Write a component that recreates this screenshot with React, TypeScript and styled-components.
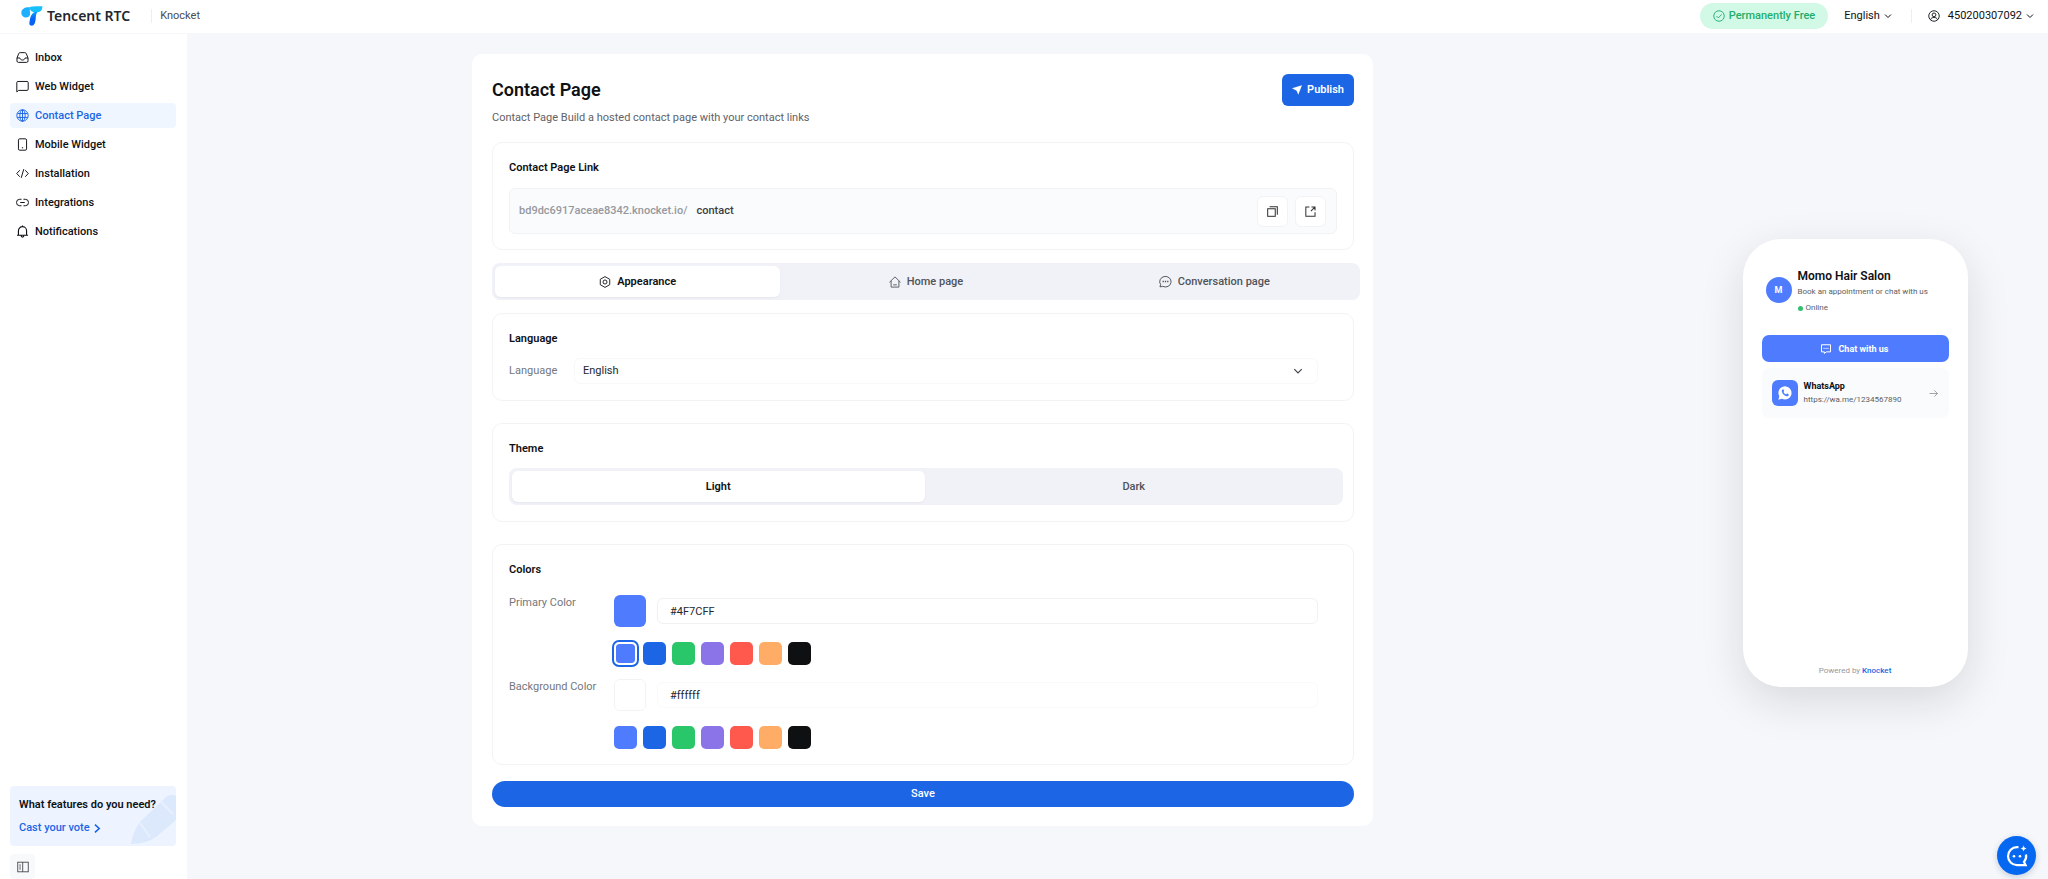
import React, { useState } from "react";
import styled, { createGlobalStyle, css } from "styled-components";

const GlobalStyle = createGlobalStyle`
  *, *::before, *::after { box-sizing: border-box; }
  body {
    margin: 0;
    background: #f5f7fb;
    color: #0f1115;
    font-family: Roboto, "Liberation Sans", sans-serif;
    font-size: 11px;
    line-height: 16px;
  }
  button, input, select { font: inherit; color: inherit; }
  button { cursor: pointer; border: 0; padding: 0; background: none; }
  h1, h2, p { margin: 0; }
  a { text-decoration: none; color: inherit; }
  svg { display: block; flex: none; }
`;

/* ---------- icons ---------- */

type IconProps = { size?: number; strokeWidth?: number; children?: React.ReactNode };

const Icon = ({ size = 13, strokeWidth = 1.2, children }: IconProps) => (
  <svg
    width={size}
    height={size}
    viewBox="0 0 16 16"
    fill="none"
    stroke="currentColor"
    strokeWidth={strokeWidth}
    aria-hidden="true"
  >
    {children}
  </svg>
);

const InboxIcon = () => (
  <Icon>
    <path d="M1.200 8.600 3.300 3.300Q3.800 2 5.200 2h5.600q1.400 0 1.900 1.300l2.100 5.300v3.600q0 1.800-1.800 1.800H3q-1.800 0-1.800-1.800z" />
    <path d="M1.200 8.600h3.600c.3 1.600 1.600 2.500 3.200 2.500s2.900-.9 3.200-2.500h3.600" />
  </Icon>
);
const WidgetIcon = () => (
  <Icon>
    <path d="M1 14.600V3.200Q1 1.800 2.400 1.800h11.200Q15 1.800 15 3.200v8.200q0 1.400-1.400 1.400H3.200z" />
  </Icon>
);
const GlobeIcon = () => (
  <Icon>
    <circle cx="8" cy="8" r="7" />
    <ellipse cx="8" cy="8" rx="3.300" ry="7" />
    <path d="M1.700 5.600h12.600M1.700 10.400h12.600M8 1v14" />
  </Icon>
);
const MobileIcon = () => (
  <Icon>
    <rect x="3" y="1" width="10" height="14" rx="1.600" />
    <path d="M7.200 12h1.600" />
  </Icon>
);
const CodeIcon = () => (
  <Icon>
    <path d="M4.600 4 .9 8l3.700 4M11.400 4l3.700 4-3.700 4M9.600 2.600 6.400 13.400" />
  </Icon>
);
const LinkIcon = () => (
  <Icon>
    <path d="M6.800 4H4.600a4 4 0 0 0 0 8h2.200M9.200 4h2.200a4 4 0 0 1 0 8H9.200M5.200 8h5.600" />
  </Icon>
);
const BellIcon = () => (
  <Icon strokeWidth={1.4}>
    <path d="M3 12.400V7a5 5 0 0 1 10 0v5.400M1.200 12.600h13.600M8 .6V2M6.200 13c.2 2.600 3.400 2.600 3.600 0" />
  </Icon>
);
const CheckCircleIcon = () => (
  <Icon size={12}>
    <circle cx="8" cy="8" r="7" />
    <path d="m4.600 8 2.500 2.500 4.500-4.700" />
  </Icon>
);
const UserIcon = () => (
  <Icon size={12}>
    <circle cx="8" cy="8" r="7" />
    <circle cx="8" cy="6.500" r="2.500" />
    <path d="M3.400 13c.7-2.400 2.300-3 4.600-3s3.900.6 4.600 3" />
  </Icon>
);
const ChevronDownIcon = ({ size = 8, strokeWidth = 2 }: IconProps) => (
  <Icon size={size} strokeWidth={strokeWidth}>
    <path d="m2 5 6 6 6-6" />
  </Icon>
);
const ChevronRightIcon = () => (
  <Icon size={9} strokeWidth={2.8}>
    <path d="m3.500 1 7.500 7-7.500 7" />
  </Icon>
);
const PanelIcon = () => (
  <Icon size={12}>
    <rect x="1" y="1.600" width="14" height="12.800" />
    <path d="M7.600 1.600v12.800M3 5.400h2.200M3 8h2.200M3 10.600h2.200" />
  </Icon>
);
const PlaneIcon = () => (
  <svg width="10" height="10" viewBox="0 0 16 16" fill="currentColor" aria-hidden="true">
    <path d="M0 5.200 16 .4 10 15.400 7.400 9.200z" />
  </svg>
);
const CopyIcon = () => (
  <Icon size={11} strokeWidth={1.5}>
    <rect x="1" y="4" width="11" height="11" />
    <path d="M3.800 1.200H15v11.400" />
  </Icon>
);
const OpenIcon = () => (
  <Icon size={11} strokeWidth={1.5}>
    <path d="M6.400 1.400H1.200v13.400h13.400V9M9.400 1.400h5.200v5.200M14.600 1.400 8.600 7.400" />
  </Icon>
);
const HexIcon = () => (
  <Icon size={12}>
    <path d="M8 .8 14.300 4.400v7.200L8 15.200 1.700 11.600V4.400z" />
    <circle cx="8" cy="8" r="2.700" />
  </Icon>
);
const HomeIcon = () => (
  <Icon size={12}>
    <path d="M.6 8.400 8 1.200l7.400 7.200M2.800 6.600v8.200h10.400V6.600M5.600 11.800h4.800" />
  </Icon>
);
const BubbleIcon = () => (
  <Icon size={13}>
    <path d="M1.200 14.600 2 11.800A7 6.500 0 1 1 4.600 14z" />
    <path d="M4.400 8H6M7.200 8h1.600M10 8h1.600" strokeWidth="1.800" />
  </Icon>
);
const ChatSquareIcon = () => (
  <Icon size={10} strokeWidth={1.6}>
    <path d="M.8 1.200h14.400v11.400H8.400l-3 2.600v-2.600H.8zM4 7h1.800M7.100 7h1.800M10.200 7H12" />
  </Icon>
);
const ArrowRightIcon = () => (
  <Icon size={9}>
    <path d="M1 8h14M9.400 2.400 15 8l-5.600 5.600" />
  </Icon>
);
const WhatsAppIcon = () => (
  <svg width="14" height="14" viewBox="0 0 16 16" aria-hidden="true">
    <path d="M.4 15.600 1.500 11.700A7.500 7.500 0 1 1 4.400 14.500z" fill="#fff" />
    <path
      d="M5.100 4c.5-.5 1-.3 1.200.1l.6 1.400c.1.300 0 .5-.2.800l-.4.500c.6 1.300 1.500 2.200 2.900 2.800l.7-.8c.2-.2.4-.2.600-.1l1.500.8c.4.200.4.500.2 1-.4 1-1.600 1.500-2.600 1.200C7 11 5 9 4.400 6.600 4.100 5.500 4.500 4.600 5.100 4z"
      fill="#4f7cff"
    />
  </svg>
);
const LogoMark = () => (
  <svg width="22" height="20" viewBox="64 16 66 60" aria-hidden="true">
    <defs>
      <linearGradient id="stem" x1="0" y1="0" x2="0" y2="1">
        <stop offset="0" stopColor="#0aa5fb" />
        <stop offset=".5" stopColor="#0563f5" />
      </linearGradient>
    </defs>
    <path d="M90 20C76 19 65 25 65 36c0 10 9 16 18 14 8-2 9-9 8-15-1-7 0-11-1-15z" fill="#1fb0fd" />
    <path d="M88 21c6-5 18-4 40-4.500C129 28 122 36 106 35 98 35 92 30 88 21z" fill="#16c0fb" />
    <path d="M113 34c-4 6-4 12-5 20-1 12-4 21-12 21-7 0-8-6-6-14 2-12 4-20 13-26 4-2 8-1 10-1z" fill="url(#stem)" />
  </svg>
);
const AssistantIcon = () => (
  <svg width="24" height="24" viewBox="0 0 24 24" fill="none" aria-hidden="true">
    <path
      d="M13.500 3.200H12a8.900 8.900 0 1 0 0 17.900h8.600l-1.600-3.200a8.900 8.900 0 0 0 2-7.400"
      stroke="#fff"
      strokeWidth="2.200"
    />
    <path d="M18.600 1.200c.4 2 1 2.700 3 3.200-2 .5-2.600 1.200-3 3.200-.4-2-1-2.700-3-3.200 2-.5 2.600-1.200 3-3.200z" fill="#fff" />
    <circle cx="9" cy="12.200" r="1.300" fill="#fff" />
    <circle cx="15" cy="12.200" r="1.300" fill="#fff" />
  </svg>
);
const PencilArt = () => (
  <svg width="46" height="54" viewBox="0 0 46 54" aria-hidden="true">
    <path d="M1 54C3 44 6 36 12 30L36 7q5-4 10-1v24L26 47Q16 54 1 54z" fill="#dce9fd" />
    <path d="M31 12 43 24M10 33l10 14" stroke="#e8f0fe" strokeWidth="2" />
  </svg>
);

/* ---------- header ---------- */

const Page = styled.div`
  min-height: 100vh;
  display: flex;
  flex-direction: column;
`;

const Header = styled.header`
  height: 34px;
  padding: 0 14px 2px 21px;
  display: flex;
  align-items: center;
  background: #fff;
  border-bottom: 1px solid #f6f7fa;
`;

const Brand = styled.a`
  display: flex;
  align-items: center;
  gap: 4px;
  font: 600 14px/20px "Noto Sans", sans-serif;
  color: #23272e;
`;

const Divider = styled.span<{ $gap: number; $end: number }>`
  width: 1px;
  height: 14px;
  margin: 0 ${(p) => p.$end}px 0 ${(p) => p.$gap}px;
  background: #eceef2;
`;

const Product = styled.span`
  color: #4a4d52;
`;

const HeaderRight = styled.div`
  margin-left: auto;
  display: flex;
  align-items: center;
`;

const FreePill = styled.span`
  height: 26px;
  margin-right: 16px;
  padding: 0 13px;
  display: flex;
  align-items: center;
  gap: 4px;
  border-radius: 13px;
  background: #d2f8e6;
  color: #1fae6c;
  font-weight: 500;
`;

const HeaderButton = styled.button`
  display: flex;
  align-items: center;
  gap: 4px;
`;

const Account = styled.span`
  margin-left: 4px;
`;

/* ---------- sidebar ---------- */

const Body = styled.div`
  flex: 1;
  display: flex;
`;

const Sidebar = styled.aside`
  width: 187px;
  flex: none;
  padding: 11px 11px 0 10px;
  display: flex;
  flex-direction: column;
  background: #fff;
`;

const Nav = styled.nav`
  display: flex;
  flex-direction: column;
  gap: 4px;
  margin-bottom: auto;
`;

const NavItem = styled.a<{ $active?: boolean }>`
  height: 25px;
  padding: 0 6px;
  display: flex;
  align-items: center;
  gap: 6px;
  border-radius: 4px;
  font-weight: 500;
  ${(p) =>
    p.$active &&
    css`
      background: #f0f6ff;
      color: #1c66e5;
    `}
`;

const Promo = styled.section`
  position: relative;
  height: 60px;
  margin-bottom: 8px;
  padding: 11px 9px;
  display: flex;
  flex-direction: column;
  gap: 7px;
  border-radius: 4px;
  background: #edf4ff;
  overflow: hidden;
`;

const PromoArt = styled.div`
  position: absolute;
  right: 0;
  bottom: 2px;
`;

const PromoTitle = styled.h2`
  position: relative;
  font-size: 11px;
  line-height: 16px;
  font-weight: 600;
`;

const PromoLink = styled.a`
  position: relative;
  display: flex;
  align-items: center;
  gap: 3px;
  color: #1c66e5;
  font-weight: 500;
`;

const CollapseButton = styled.button`
  width: 25px;
  height: 25px;
  display: grid;
  place-items: center;
  border-radius: 4px;
  background: #f8f9fa;
  color: #44474d;
`;

/* ---------- editor ---------- */

const Main = styled.main`
  flex: 1;
  min-width: 0;
  display: flex;
  gap: 4px;
`;

const EditorColumn = styled.div`
  flex: 1;
  min-width: 0;
  padding: 20px 24px 24px;
`;

const EditorCard = styled.section`
  max-width: 901px;
  margin: 0 auto;
  padding: 20px 19px 19px 20px;
  border-radius: 10px;
  background: #fff;
`;

const TitleRow = styled.div`
  display: flex;
  align-items: center;
  justify-content: space-between;
`;

const Title = styled.h1`
  font-size: 18px;
  line-height: 32px;
  font-weight: 600;
`;

const PublishButton = styled.button`
  height: 32px;
  padding: 0 10px;
  display: flex;
  align-items: center;
  gap: 5px;
  border-radius: 6px;
  background: #1c66e5;
  color: #fff;
  font-weight: 600;
`;

const Subtitle = styled.p`
  margin: 4px 0 16px;
  color: #5f6267;
`;

const Panel = styled.section<{ $gap: number; $bottom: number }>`
  margin-bottom: ${(p) => p.$gap}px;
  padding: 17px 16px ${(p) => p.$bottom}px;
  border: 1px solid #f2f3f5;
  border-radius: 10px;
`;

const PanelTitle = styled.h2`
  font-size: 11px;
  line-height: 16px;
  font-weight: 600;
`;

const LinkBox = styled.div`
  height: 46px;
  margin-top: 12px;
  padding: 0 10px 0 9px;
  display: flex;
  align-items: center;
  gap: 7px;
  border: 1px solid #f0f2f4;
  border-radius: 6px;
  background: #fafbfd;
  font-weight: 500;
`;

const Domain = styled.label`
  margin-right: 2px;
  color: #96999d;
`;

const SlugInput = styled.input`
  flex: 1;
  min-width: 0;
  padding: 0;
  border: 0;
  outline: 0;
  background: none;
  color: #3b3e43;
`;

const SquareButton = styled.button`
  width: 31px;
  height: 31px;
  display: grid;
  place-items: center;
  border: 1px solid #f2f3f6;
  border-radius: 6px;
  background: #fff;
  color: #333;
`;

const Segmented = styled.div<{ $top?: number; $bottom?: number }>`
  height: 37px;
  margin: ${(p) => p.$top ?? 0}px -6px ${(p) => p.$bottom ?? 0}px 0;
  padding: 3px;
  display: flex;
  gap: 3px;
  border-radius: 8px;
  background: #f0f2f7;
`;

const Segment = styled.button<{ $active?: boolean }>`
  flex: 1;
  display: flex;
  align-items: center;
  justify-content: center;
  gap: 6px;
  border-radius: 6px;
  font-weight: 500;
  color: #505359;
  ${(p) =>
    p.$active &&
    css`
      background: #fff;
      color: #0f1115;
      font-weight: 600;
      box-shadow: 0 1px 2px rgba(30, 40, 70, 0.05);
    `}
`;

const FieldRow = styled.div`
  margin: 11px 19px 0 0;
  display: flex;
  align-items: center;
`;

const FieldLabel = styled.label<{ $width: number }>`
  width: ${(p) => p.$width}px;
  flex: none;
  color: #74777d;
`;

const SelectWrap = styled.div`
  flex: 1;
  display: grid;
  align-items: center;
  > * { grid-area: 1 / 1; }
  > svg { justify-self: end; margin-right: 15px; pointer-events: none; color: #44474d; }
`;

const Select = styled.select`
  width: 100%;
  height: 26px;
  padding: 0 28px 0 8px;
  appearance: none;
  border: 1px solid #f7f8f9;
  border-radius: 6px;
  background: #fff;
  color: #23272e;
`;

const ColorField = styled.div<{ $top: number }>`
  margin: ${(p) => p.$top}px 19px 0 0;
  display: flex;
  align-items: flex-start;
`;

const ColorControls = styled.div`
  flex: 1;
  display: flex;
  flex-direction: column;
  gap: 15px;
`;

const ColorInputs = styled.div`
  display: flex;
  align-items: center;
  gap: 11px;
`;

const ColorWell = styled.input<{ $light?: boolean }>`
  width: 32px;
  height: 32px;
  flex: none;
  padding: 0;
  appearance: none;
  overflow: hidden;
  border: ${(p) => (p.$light ? "1px solid #f2f3f5" : "0")};
  border-radius: 6px;
  background: none;
  &::-webkit-color-swatch-wrapper { padding: 0; }
  &::-webkit-color-swatch { border: 0; border-radius: 0; }
`;

const HexInput = styled.input<{ $faint?: boolean }>`
  flex: 1;
  min-width: 0;
  height: 26px;
  padding: 0 12px;
  border: 1px solid ${(p) => (p.$faint ? "#f9fafa" : "#f0f1f3")};
  border-radius: 6px;
  outline: 0;
  background: #fff;
  color: #23272e;
`;

const Palette = styled.div`
  display: flex;
  gap: 6px;
`;

const Swatch = styled.button<{ $color: string; $selected?: boolean }>`
  width: 23px;
  height: 23px;
  border-radius: 5px;
  background: ${(p) => p.$color};
  ${(p) =>
    p.$selected &&
    css`
      border: 2px solid #fff;
      background-clip: padding-box;
      box-shadow: 0 0 0 2px #1c66e5;
    `}
`;

const SaveButton = styled.button`
  width: 100%;
  height: 26px;
  display: block;
  border-radius: 13px;
  background: #1c66e5;
  color: #fff;
  font-weight: 500;
`;

/* ---------- preview ---------- */

const PreviewColumn = styled.div`
  width: 386px;
  flex: none;
  padding-top: 13px;
  display: flex;
  align-items: center;
  justify-content: center;
`;

const Phone = styled.section`
  width: 225px;
  min-height: 448px;
  padding: 28px 19px 8px;
  display: flex;
  flex-direction: column;
  border-radius: 38px;
  background: #fff;
  box-shadow: 0 14px 44px rgba(20, 20, 20, 0.13);
`;

const Profile = styled.div`
  padding-left: 4px;
  display: flex;
  align-items: center;
  gap: 6px;
`;

const Avatar = styled.span`
  width: 26px;
  height: 26px;
  flex: none;
  margin-bottom: 2px;
  display: grid;
  place-items: center;
  border-radius: 50%;
  background: #4f7cff;
  color: #fff;
  font-size: 9px;
  font-weight: 700;
`;

const BusinessName = styled.h2`
  font-size: 12px;
  line-height: 18px;
  font-weight: 600;
`;

const SmallText = styled.p`
  font-size: 8px;
  line-height: 14px;
  color: #5b5e63;
  white-space: nowrap;
`;

const Status = styled(SmallText)`
  margin-top: 2px;
  display: flex;
  align-items: center;
  gap: 3px;
  &::before {
    content: "";
    width: 5px;
    height: 5px;
    border-radius: 50%;
    background: #2fbf71;
  }
`;

const ChatButton = styled.button`
  height: 27px;
  margin-top: 20px;
  display: flex;
  align-items: center;
  justify-content: center;
  gap: 7px;
  border-radius: 7px;
  background: #4f7cff;
  color: #fff;
  font-size: 9px;
  font-weight: 700;
`;

const ContactLink = styled.a`
  height: 50px;
  margin-top: 6px;
  padding: 0 11px 0 10px;
  display: flex;
  align-items: center;
  gap: 6px;
  border-radius: 7px;
  background: #fafbfd;
  > svg { color: #777a80; }
`;

const ContactBadge = styled.span`
  width: 26px;
  height: 26px;
  display: grid;
  place-items: center;
  border-radius: 6px;
  background: #4f7cff;
`;

const ContactText = styled.div`
  flex: 1;
`;

const ContactName = styled.p`
  font-size: 9px;
  line-height: 14px;
  font-weight: 700;
`;

const Powered = styled.p`
  margin-top: auto;
  text-align: center;
  font-size: 8px;
  color: #96999d;
  a { color: #1c66e5; font-weight: 500; }
`;

const AssistantButton = styled.button`
  position: fixed;
  right: 12px;
  bottom: 4px;
  width: 39px;
  height: 39px;
  display: grid;
  place-items: center;
  border-radius: 50%;
  background: #0667f0;
  box-shadow: 0 2px 6px rgba(20, 40, 80, 0.2);
`;

/* ---------- data ---------- */

const NAV = [
  { label: "Inbox", icon: <InboxIcon /> },
  { label: "Web Widget", icon: <WidgetIcon /> },
  { label: "Contact Page", icon: <GlobeIcon /> },
  { label: "Mobile Widget", icon: <MobileIcon /> },
  { label: "Installation", icon: <CodeIcon /> },
  { label: "Integrations", icon: <LinkIcon /> },
  { label: "Notifications", icon: <BellIcon /> },
];

const TABS = [
  { label: "Appearance", icon: <HexIcon /> },
  { label: "Home page", icon: <HomeIcon /> },
  { label: "Conversation page", icon: <BubbleIcon /> },
];

const PRESETS = ["#4f7cff", "#1c66e5", "#2ac76a", "#8a74e8", "#ff584d", "#ffad66", "#0f1012"];

type ColorPickerProps = {
  id: string;
  label: string;
  value: string;
  top: number;
  light?: boolean;
  onChange: (value: string) => void;
};

const ColorPicker = ({ id, label, value, top, light, onChange }: ColorPickerProps) => (
  <ColorField $top={top}>
    <FieldLabel $width={105} htmlFor={id}>
      {label}
    </FieldLabel>
    <ColorControls>
      <ColorInputs>
        <ColorWell
          type="color"
          aria-label={`${label} picker`}
          $light={light}
          value={value.toLowerCase()}
          onChange={(e) => onChange(e.target.value)}
        />
        <HexInput id={id} $faint={light} value={value} onChange={(e) => onChange(e.target.value)} />
      </ColorInputs>
      <Palette>
        {PRESETS.map((color) => (
          <Swatch
            key={color}
            type="button"
            aria-label={color}
            $color={color}
            $selected={color === value.toLowerCase()}
            onClick={() => onChange(color)}
          />
        ))}
      </Palette>
    </ColorControls>
  </ColorField>
);

export default function App() {
  const [tab, setTab] = useState("Appearance");
  const [theme, setTheme] = useState("Light");
  const [primary, setPrimary] = useState("#4F7CFF");
  const [background, setBackground] = useState("#ffffff");
  const [slug, setSlug] = useState("contact");

  return (
    <Page>
      <GlobalStyle />
      <Header>
        <Brand href="#">
          <LogoMark />
          Tencent RTC
        </Brand>
        <Divider $gap={21} $end={8} />
        <Product>Knocket</Product>
        <HeaderRight>
          <FreePill>
            <CheckCircleIcon />
            Permanently Free
          </FreePill>
          <HeaderButton type="button">
            English
            <ChevronDownIcon />
          </HeaderButton>
          <Divider $gap={19} $end={16} />
          <HeaderButton type="button">
            <UserIcon />
            <Account>450200307092</Account>
            <ChevronDownIcon />
          </HeaderButton>
        </HeaderRight>
      </Header>
      <Body>
        <Sidebar>
          <Nav>
            {NAV.map((item) => (
              <NavItem key={item.label} href="#" $active={item.label === "Contact Page"}>
                {item.icon}
                {item.label}
              </NavItem>
            ))}
          </Nav>
          <Promo>
            <PromoArt>
              <PencilArt />
            </PromoArt>
            <PromoTitle>What features do you need?</PromoTitle>
            <PromoLink href="#">
              Cast your vote
              <ChevronRightIcon />
            </PromoLink>
          </Promo>
          <CollapseButton type="button" aria-label="Collapse sidebar">
            <PanelIcon />
          </CollapseButton>
        </Sidebar>
        <Main>
          <EditorColumn>
            <EditorCard>
              <TitleRow>
                <Title>Contact Page</Title>
                <PublishButton type="button">
                  <PlaneIcon />
                  Publish
                </PublishButton>
              </TitleRow>
              <Subtitle>Contact Page Build a hosted contact page with your contact links</Subtitle>

              <Panel $gap={13} $bottom={15}>
                <PanelTitle>Contact Page Link</PanelTitle>
                <LinkBox>
                  <Domain htmlFor="slug">bd9dc6917aceae8342.knocket.io/</Domain>
                  <SlugInput id="slug" value={slug} onChange={(e) => setSlug(e.target.value)} />
                  <SquareButton type="button" aria-label="Copy link">
                    <CopyIcon />
                  </SquareButton>
                  <SquareButton type="button" aria-label="Open link">
                    <OpenIcon />
                  </SquareButton>
                </LinkBox>
              </Panel>

              <Segmented role="tablist" $bottom={13}>
                {TABS.map((item) => (
                  <Segment
                    key={item.label}
                    type="button"
                    role="tab"
                    aria-selected={tab === item.label}
                    $active={tab === item.label}
                    onClick={() => setTab(item.label)}
                  >
                    {item.icon}
                    {item.label}
                  </Segment>
                ))}
              </Segmented>

              <Panel $gap={22} $bottom={16}>
                <PanelTitle>Language</PanelTitle>
                <FieldRow>
                  <FieldLabel $width={65} htmlFor="language">
                    Language
                  </FieldLabel>
                  <SelectWrap>
                    <Select id="language" defaultValue="English">
                      <option>English</option>
                    </Select>
                    <ChevronDownIcon size={10} />
                  </SelectWrap>
                </FieldRow>
              </Panel>

              <Panel $gap={22} $bottom={16}>
                <PanelTitle>Theme</PanelTitle>
                <Segmented $top={11}>
                  {["Light", "Dark"].map((name) => (
                    <Segment
                      key={name}
                      type="button"
                      aria-pressed={theme === name}
                      $active={theme === name}
                      onClick={() => setTheme(name)}
                    >
                      {name}
                    </Segment>
                  ))}
                </Segmented>
              </Panel>

              <Panel $gap={16} $bottom={15}>
                <PanelTitle>Colors</PanelTitle>
                <ColorPicker
                  id="primary"
                  label="Primary Color"
                  value={primary}
                  top={17}
                  onChange={setPrimary}
                />
                <ColorPicker
                  id="background"
                  label="Background Color"
                  value={background}
                  top={14}
                  light
                  onChange={setBackground}
                />
              </Panel>

              <SaveButton type="button">Save</SaveButton>
            </EditorCard>
          </EditorColumn>

          <PreviewColumn>
            <Phone>
              <Profile>
                <Avatar>M</Avatar>
                <div>
                  <BusinessName>Momo Hair Salon</BusinessName>
                  <SmallText>Book an appointment or chat with us</SmallText>
                  <Status>Online</Status>
                </div>
              </Profile>
              <ChatButton type="button">
                <ChatSquareIcon />
                Chat with us
              </ChatButton>
              <ContactLink href="#">
                <ContactBadge>
                  <WhatsAppIcon />
                </ContactBadge>
                <ContactText>
                  <ContactName>WhatsApp</ContactName>
                  <SmallText>https://wa.me/1234567890</SmallText>
                </ContactText>
                <ArrowRightIcon />
              </ContactLink>
              <Powered>
                Powered by <a href="#">Knocket</a>
              </Powered>
            </Phone>
          </PreviewColumn>
        </Main>
      </Body>
      <AssistantButton type="button" aria-label="Open assistant">
        <AssistantIcon />
      </AssistantButton>
    </Page>
  );
}
